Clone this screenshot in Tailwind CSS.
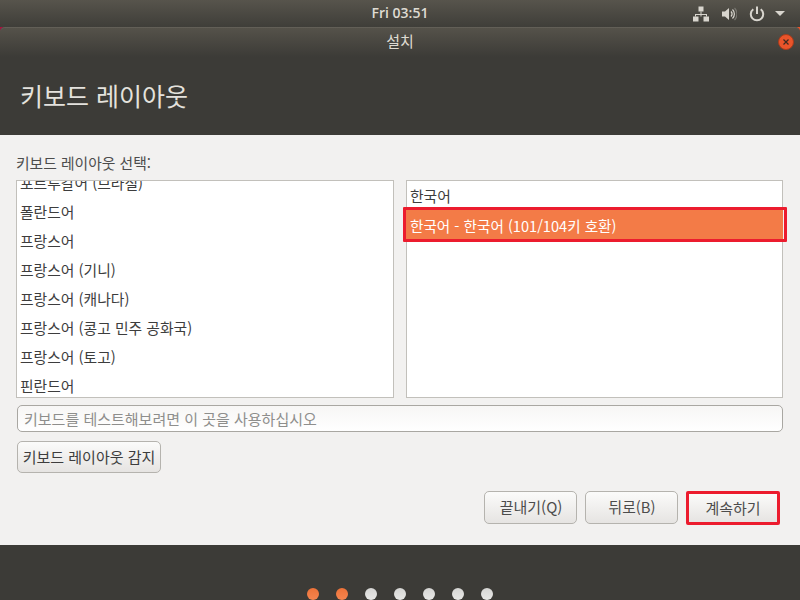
<!DOCTYPE html>
<html lang="ko">
<head>
    <meta charset="UTF-8">
    <title>설치</title>
    <script src="https://cdn.jsdelivr.net/npm/@tailwindcss/browser@4"></script>
</head>
<body class="w-[800px] h-[600px] overflow-hidden flex flex-col bg-[#3c3b37] font-['Noto_Sans_CJK_KR',sans-serif] text-[14.8px] text-[#3d3d3d]">
    <!-- top panel -->
    <header class="h-[27px] shrink-0 relative flex items-center justify-center bg-gradient-to-b from-[#57544c] to-[#3f3e39]">
        <span class="font-['Open_Sans',sans-serif] font-semibold text-[14px] leading-[25px] pb-[2px] text-[#dfdbd2]">Fri 03:51</span>
        <div class="absolute right-[15px] top-0 h-[27px] flex items-center gap-[12px]">
            <svg width="16" height="16" viewBox="0 0 16 16" fill="#d8d5ce"><rect x="5.500" y="0.500" width="5" height="5"/><rect x="0" y="10.500" width="5.500" height="5"/><rect x="10.500" y="10.500" width="5.500" height="5"/><path d="M7.500 5.500h1v2.500h5.500v2.500h-1v-1.500H8.500v1.500h-1v-1.500H3v1.500H2v-2.500h5.500z"/></svg>
            <svg width="16" height="16" viewBox="0 0 16 16" fill="none"><path d="M1 5.500h3L8 2v12l-4-3.500H1z" fill="#d8d5ce"/><path d="M10 5.500a3.500 3.500 0 0 1 0 5" stroke="#d8d5ce" stroke-width="1.300"/><path d="M11.500 3.500a6.300 6.300 0 0 1 0 9" stroke="#d8d5ce" stroke-width="1.200"/><path d="M13.500 2a8.500 8.500 0 0 1 0 12" stroke="#77756f" stroke-width="1.200"/></svg>
            <span class="flex items-center gap-[10px]">
                <svg width="16" height="16" viewBox="0 0 16 16" fill="none" stroke="#d8d5ce" stroke-width="2"><path d="M4.300 3.200a6.200 6.200 0 1 0 7.400 0"/><path d="M8 0.500v7.500"/></svg>
                <span class="w-0 h-0 border-x-[5px] border-x-transparent border-t-[5px] border-t-[#d8d5ce]"></span>
            </span>
        </div>
    </header>

    <!-- window, the wallpaper only shows in its rounded top corners -->
    <div class="flex-1 flex flex-col bg-gradient-to-r from-[#a8123f] to-[#e9542a]">
        <div class="h-[108px] shrink-0 relative bg-[#3c3b37] rounded-t-[5px]">
            <div class="h-[30px] relative flex items-center justify-center border-t border-[#625f57] rounded-t-[5px] bg-gradient-to-b from-[#55524a] to-[#3c3b37]">
                <span class="text-[15px] leading-[20px] pb-[3px] text-[#dfdbd2]">설치</span>
                <span class="absolute right-[6px] top-[6px] w-[16px] h-[16px] rounded-full bg-[#e9542a] border border-[#a83c1c] flex items-center justify-center">
                    <svg width="8" height="8" viewBox="0 0 8 8" stroke="#3c2a20" stroke-width="1.200"><path d="M1.500 1.500l5 5M6.500 1.500l-5 5"/></svg>
                </span>
            </div>
            <h1 class="pl-[20px] pt-[20px] text-[25px] leading-[36px] text-[#e4e2dd]">키보드 레이아웃</h1>
        </div>

        <main class="h-[410px] shrink-0 bg-[#f2f1f0] px-[16px] pt-[18px]">
            <p class="h-[20px] leading-[20px] text-[#4c4c4c]">키보드 레이아웃 선택:</p>
            <div class="mt-[7px] flex gap-[12px]">
                <ul class="w-[378px] h-[218px] overflow-hidden bg-white border border-[#c2c0bb] pl-[3px] text-[#3d3d3d]">
                    <li class="h-[29px] leading-[29px] mt-[-13px]">포르투갈어 (브라질)</li>
                    <li class="h-[29px] leading-[29px]">폴란드어</li>
                    <li class="h-[29px] leading-[29px]">프랑스어</li>
                    <li class="h-[29px] leading-[29px]">프랑스어 (기니)</li>
                    <li class="h-[29px] leading-[29px]">프랑스어 (캐나다)</li>
                    <li class="h-[29px] leading-[29px]">프랑스어 (콩고 민주 공화국)</li>
                    <li class="h-[29px] leading-[29px]">프랑스어 (토고)</li>
                    <li class="h-[29px] leading-[29px]">핀란드어</li>
                </ul>
                <ul class="relative w-[377px] h-[218px] bg-white border border-[#c2c0bb]">
                    <li class="h-[28px] leading-[29px] pl-[3px]">한국어</li>
                    <li class="relative h-[30px] leading-[33px] mx-[-1px] pl-[4px] text-[14.6px] bg-[#f37b47] text-white">
                        한국어 - 한국어 (101/104키 호환)
                        <span class="absolute left-[-3px] right-[-4px] top-[-2px] bottom-[-3px] rounded-[1px] border-[3px] border-[#ec1c2e]"></span>
                    </li>
                </ul>
            </div>
            <input type="text" placeholder="키보드를 테스트해보려면 이 곳을 사용하십시오" class="block mt-[7px] ml-[1px] w-[766px] h-[27px] px-[6px] text-[15px] rounded-[5px] border border-[#a9a7a2] bg-gradient-to-b from-[#f7f6f5] to-white placeholder:text-[#8e8e8c]">
            <button class="block mt-[9px] ml-[1px] w-[144px] h-[32px] rounded-[5px] border border-[#b5b3ae] bg-gradient-to-b from-[#fbfbfa] to-[#e6e4e2] text-[15px] text-[#3d3d3d]">키보드 레이아웃 감지</button>
            <div class="mt-[18px] flex justify-end pr-[4px]">
                <button class="w-[93px] h-[33px] pl-[1px] rounded-[5px] border border-[#b5b3ae] bg-gradient-to-b from-[#fbfbfa] to-[#e6e4e2] text-[15px] text-[#4c4c4c] mr-[8px]">끝내기(Q)</button>
                <button class="w-[93px] h-[33px] pl-[1px] rounded-[5px] border border-[#b5b3ae] bg-gradient-to-b from-[#fbfbfa] to-[#e6e4e2] text-[#4c4c4c] mr-[8px]">뒤로(B)</button>
                <button class="w-[94px] h-[34px] rounded-[2px] border-[3px] border-[#ec1c2e] bg-gradient-to-b from-[#fbfbfa] to-[#e6e4e2] text-[15px] text-[#4c4c4c]">계속하기</button>
            </div>
        </main>

        <!-- progress dots -->
        <footer class="flex-1 bg-[#3c3b37] flex justify-center gap-[17px] pt-[43px]">
            <span class="w-[12px] h-[12px] rounded-full bg-gradient-to-b from-[#ee7238] to-[#f5854f]"></span>
            <span class="w-[12px] h-[12px] rounded-full bg-gradient-to-b from-[#ee7238] to-[#f5854f]"></span>
            <span class="w-[12px] h-[12px] rounded-full bg-gradient-to-b from-[#d6d6d4] to-[#e8e8e6]"></span>
            <span class="w-[12px] h-[12px] rounded-full bg-gradient-to-b from-[#d6d6d4] to-[#e8e8e6]"></span>
            <span class="w-[12px] h-[12px] rounded-full bg-gradient-to-b from-[#d6d6d4] to-[#e8e8e6]"></span>
            <span class="w-[12px] h-[12px] rounded-full bg-gradient-to-b from-[#d6d6d4] to-[#e8e8e6]"></span>
            <span class="w-[12px] h-[12px] rounded-full bg-gradient-to-b from-[#d6d6d4] to-[#e8e8e6]"></span>
        </footer>
    </div>
</body>
</html>
